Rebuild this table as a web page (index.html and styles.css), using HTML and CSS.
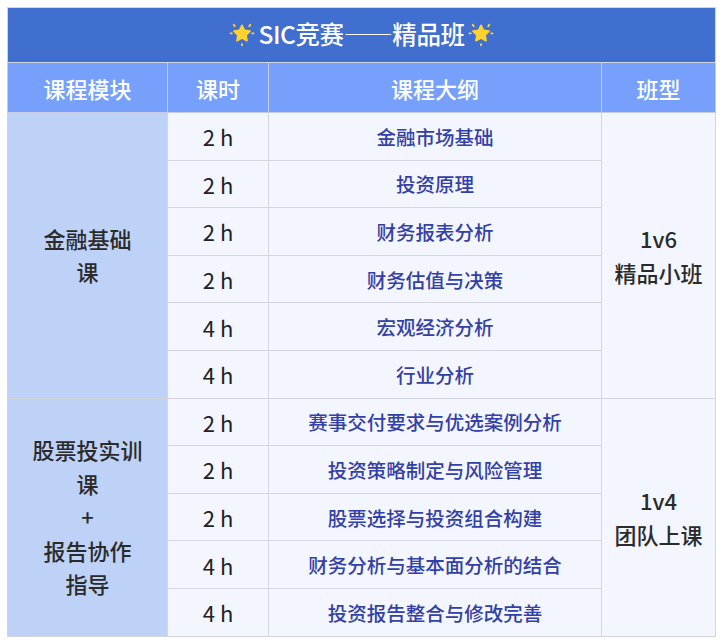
FILE: index.html
```html
<!DOCTYPE html>
<html lang="zh-CN">
<head>
<meta charset="utf-8">
<link rel="stylesheet" href="styles.css">
</head>
<body>
<table class="course">
  <colgroup>
    <col class="c-mod"><col class="c-hour"><col class="c-out"><col class="c-type">
  </colgroup>
  <thead>
    <tr class="title-row">
      <th colspan="4">
        <span class="title">
          <svg class="star" viewBox="0 0 24 24" aria-hidden="true">
            <path d="M12 4l2.3 4.7 5.1.7-3.7 3.6.9 5.1-4.6-2.4-4.6 2.4.9-5.1-3.7-3.6 5.1-.7z" fill="#ffd22e" stroke="#ffd22e" stroke-width="1.6" stroke-linejoin="round"/>
            <g stroke="#ffd22e" stroke-width="1.7" stroke-linecap="round">
              <line x1="4.4" y1="3.4" x2="5.3" y2="4.8"/>
              <line x1="19.6" y1="3.4" x2="18.7" y2="4.8"/>
              <line x1="1.4" y1="11.4" x2="2.6" y2="11.4"/>
              <line x1="22.6" y1="11.4" x2="21.4" y2="11.4"/>
              <line x1="12" y1="21.4" x2="12" y2="22.4"/>
            </g>
          </svg>
          <span class="title-text">SIC竞赛——精品班</span>
          <svg class="star" viewBox="0 0 24 24" aria-hidden="true">
            <path d="M12 4l2.3 4.7 5.1.7-3.7 3.6.9 5.1-4.6-2.4-4.6 2.4.9-5.1-3.7-3.6 5.1-.7z" fill="#ffd22e" stroke="#ffd22e" stroke-width="1.6" stroke-linejoin="round"/>
            <g stroke="#ffd22e" stroke-width="1.7" stroke-linecap="round">
              <line x1="4.4" y1="3.4" x2="5.3" y2="4.8"/>
              <line x1="19.6" y1="3.4" x2="18.7" y2="4.8"/>
              <line x1="1.4" y1="11.4" x2="2.6" y2="11.4"/>
              <line x1="22.6" y1="11.4" x2="21.4" y2="11.4"/>
              <line x1="12" y1="21.4" x2="12" y2="22.4"/>
            </g>
          </svg>
        </span>
      </th>
    </tr>
    <tr class="head-row">
      <th>课程模块</th><th>课时</th><th>课程大纲</th><th>班型</th>
    </tr>
  </thead>
  <tbody>
    <tr>
      <td class="mod" rowspan="6">金融基础<br>课</td>
      <td class="hour">2 h</td><td class="out">金融市场基础</td>
      <td class="type" rowspan="6">1v6<br>精品小班</td>
    </tr>
    <tr><td class="hour">2 h</td><td class="out">投资原理</td></tr>
    <tr><td class="hour">2 h</td><td class="out">财务报表分析</td></tr>
    <tr><td class="hour">2 h</td><td class="out">财务估值与决策</td></tr>
    <tr><td class="hour">4 h</td><td class="out">宏观经济分析</td></tr>
    <tr><td class="hour">4 h</td><td class="out">行业分析</td></tr>
    <tr>
      <td class="mod" rowspan="5">股票投实训<br>课<br>+<br>报告协作<br>指导</td>
      <td class="hour">2 h</td><td class="out">赛事交付要求与优选案例分析</td>
      <td class="type" rowspan="5">1v4<br>团队上课</td>
    </tr>
    <tr><td class="hour">2 h</td><td class="out">投资策略制定与风险管理</td></tr>
    <tr><td class="hour">2 h</td><td class="out">股票选择与投资组合构建</td></tr>
    <tr><td class="hour">4 h</td><td class="out">财务分析与基本面分析的结合</td></tr>
    <tr><td class="hour">4 h</td><td class="out">投资报告整合与修改完善</td></tr>
  </tbody>
</table>
</body>
</html>
```

FILE: styles.css
```css
html, body {
  margin: 0;
  padding: 0;
  background: #ffffff;
}
body {
  padding: 7px;
  font-family: "Noto Sans CJK SC", "Noto Sans", sans-serif;
}
.course {
  width: 708px;
  border-collapse: collapse;
  table-layout: fixed;
  border: 1px solid #d3d6df;
}
.c-mod { width: 160px; }
.c-hour { width: 101px; }
.c-out { width: 333px; }
.c-type { width: 114px; }

.course th, .course td {
  border: 1px solid #d3d6df;
  padding: 0;
  text-align: center;
  vertical-align: middle;
}
.title-row th {
  height: 54px;
  background: #416fd0;
  color: #ffffff;
  font-size: 24.5px;
  font-weight: 500;
  border-color: #d3d6df;
}
.title {
  display: inline-flex;
  align-items: center;
  gap: 3px;
}
.title-text {
  letter-spacing: -0.4px;
}
.star {
  width: 26px;
  height: 26px;
}
.head-row th {
  height: 49px;
  background: #76a0fc;
  color: #ffffff;
  font-size: 22px;
  font-weight: 500;
  border-color: #c6cce0;
}
.course tbody td {
  height: 46.6px;
  background: #f3f6ff;
}
.course td.mod {
  background: #bed2f8;
  color: #2b2b2b;
  font-size: 22px;
  font-weight: 500;
  line-height: 33.5px;
}
.course td.hour {
  color: #222222;
  font-size: 22px;
  font-weight: 400;
}
.course td.out {
  color: #3340a6;
  font-size: 19.5px;
  font-weight: 500;
}
.course td.type {
  color: #2b2b2b;
  font-size: 22px;
  font-weight: 500;
  line-height: 34px;
}
```
